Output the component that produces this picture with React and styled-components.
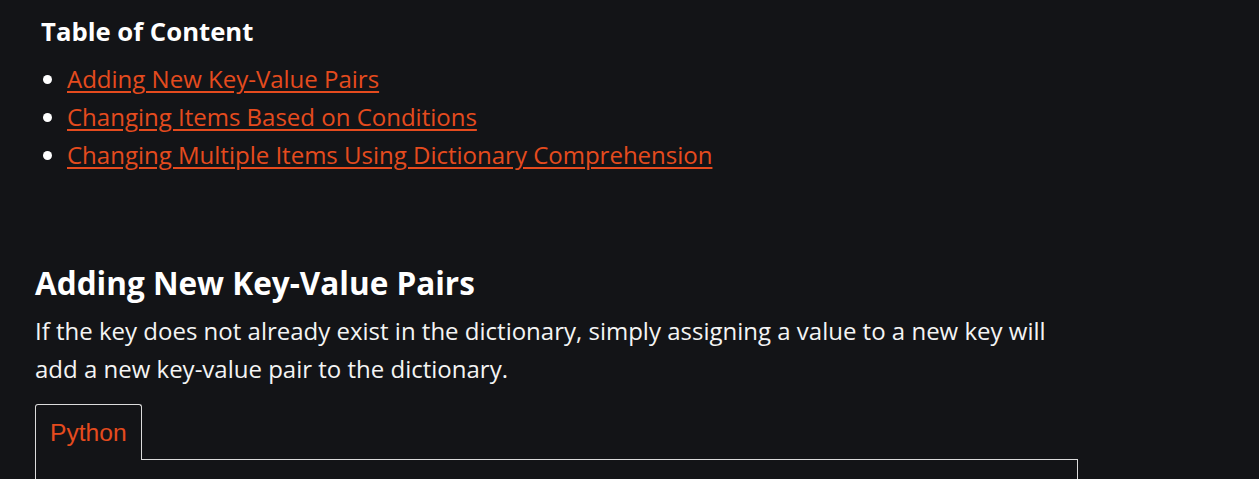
import React from "react";
import styled, { createGlobalStyle } from "styled-components";

const Global = createGlobalStyle`
  html, body { margin: 0; padding: 0; background: #131417; }
  body { font-family: "Open Sans", "Noto Sans", sans-serif; color: #ffffff; }
`;

const Page = styled.main`
  padding: 14px 0 0 35px;
  width: 1043px;
`;

const Toc = styled.nav`
  padding-left: 6px;
`;

const TocTitle = styled.h3`
  margin: 0;
  font-size: 25.7px;
  font-weight: 700;
  line-height: 36px;
`;

const TocList = styled.ul`
  margin: 10px 0 0;
  padding-left: 26px;
  list-style: disc;
`;

const TocItem = styled.li`
  font-size: 24px;
  line-height: 38px;
  &::marker { color: #ffffff; }
`;

const Link = styled.a`
  color: #e54b1e;
  text-decoration: underline;
  text-underline-offset: 3px;
  text-decoration-thickness: 1.5px;
`;

const Section = styled.section`
  margin-top: 89px;
`;

const Heading = styled.h2`
  margin: 0;
  font-size: 31.5px;
  font-weight: 700;
  line-height: 40px;
`;

const Para = styled.p`
  margin: 9px 0 0;
  font-size: 24px;
  line-height: 38px;
  color: #f4f4f4;
  max-width: 1040px;
`;

const Tabs = styled.div`
  margin-top: 16px;
`;

const TabRow = styled.div`
  display: flex;
`;

const Tab = styled.button`
  font-family: "Liberation Sans", Arial, sans-serif;
  font-size: 24.6px;
  color: #e54b1e;
  background: #131417;
  border: 1px solid #dcdcdc;
  border-bottom: none;
  border-radius: 3px 3px 0 0;
  padding: 0 14px;
  height: 56px;
  margin-bottom: -1px;
  position: relative;
  z-index: 1;
  cursor: pointer;
`;

const Panel = styled.div`
  border: 1px solid #dcdcdc;
  height: 120px;
`;

export default function App() {
  const links = [
    "Adding New Key-Value Pairs",
    "Changing Items Based on Conditions",
    "Changing Multiple Items Using Dictionary Comprehension",
  ];
  return (
    <>
      <Global />
      <Page>
        <Toc>
          <TocTitle>Table of Content</TocTitle>
          <TocList>
            {links.map((l) => (
              <TocItem key={l}>
                <Link href="#">{l}</Link>
              </TocItem>
            ))}
          </TocList>
        </Toc>
        <Section>
          <Heading>Adding New Key-Value Pairs</Heading>
          <Para>
            If the key does not already exist in the dictionary, simply assigning a value to a new key will
            add a new key-value pair to the dictionary.
          </Para>
          <Tabs>
            <TabRow>
              <Tab>Python</Tab>
            </TabRow>
            <Panel />
          </Tabs>
        </Section>
      </Page>
    </>
  );
}
